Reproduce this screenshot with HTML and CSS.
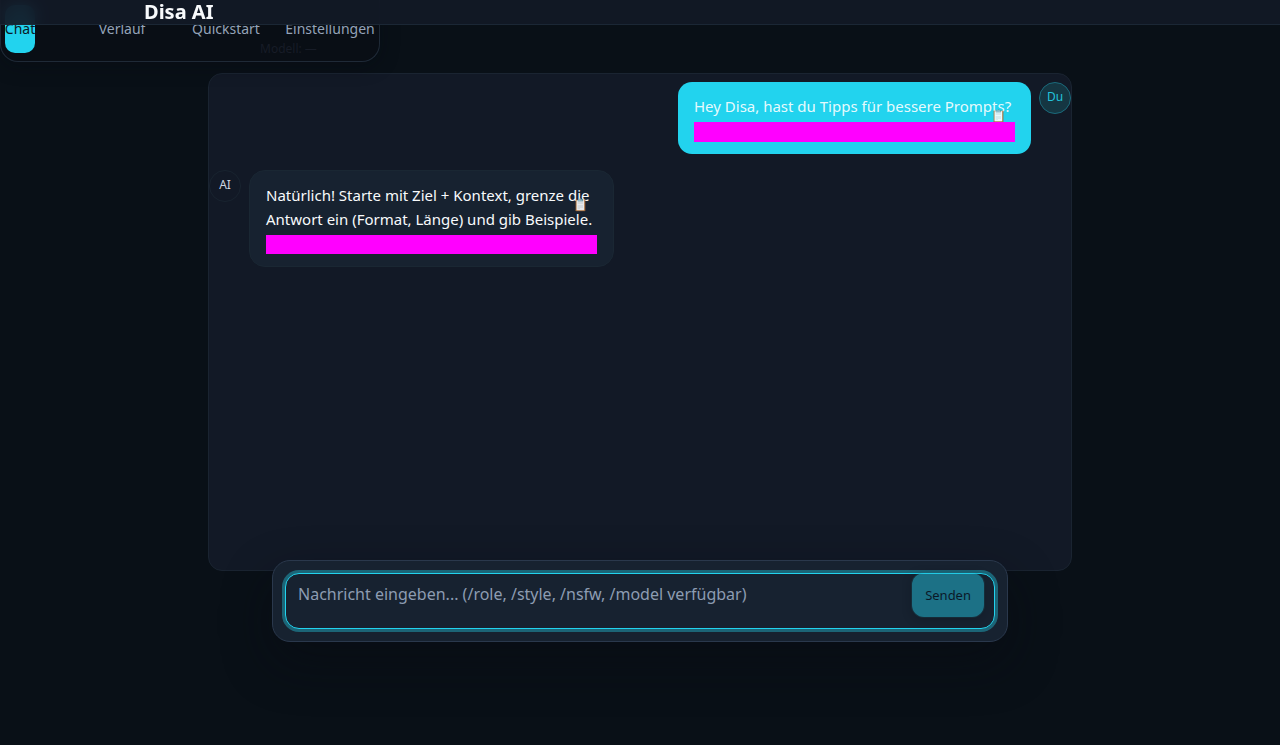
FILE: index.html
```html
<!DOCTYPE html>
<html lang="de">
<head>
<meta charset="utf-8">
<meta name="viewport" content="width=device-width, initial-scale=1">
<title>Disa AI</title>
<link rel="stylesheet" href="styles.css">
</head>
<body>
<header class="topbar"><h1 class="brand">Disa AI</h1></header>
<nav class="tabs" aria-label="Hauptnavigation">
  <a class="tab tab-active" href="#chat">Chat</a>
  <a class="tab" href="#verlauf">Verlauf</a>
  <a class="tab" href="#quickstart">Quickstart</a>
  <a class="tab" href="#einstellungen">Einstellungen</a>
</nav>
<main class="page">
  <p class="model">Modell: —</p>
  <section class="chat" aria-label="Chat">
    <article class="row row-user">
      <div class="bubble bubble-user">
        <p class="text">Hey Disa, hast du Tipps für bessere Prompts?</p>
        <button class="copy" type="button" aria-label="Kopieren">📋</button>
        <div class="meta"></div>
      </div>
      <div class="avatar avatar-user">Du</div>
    </article>
    <article class="row">
      <div class="avatar">AI</div>
      <div class="bubble bubble-ai">
        <p class="text">Natürlich! Starte mit Ziel + Kontext, grenze die<br>Antwort ein (Format, Länge) und gib Beispiele.</p>
        <button class="copy" type="button" aria-label="Kopieren">📋</button>
        <div class="meta"></div>
      </div>
    </article>
  </section>
  <form class="composer">
    <div class="field">
      <textarea class="input" aria-label="Nachricht" placeholder="Nachricht eingeben... (/role, /style, /nsfw, /model verfügbar)"></textarea>
      <button class="send" type="button">Senden</button>
    </div>
  </form>
</main>
</body>
</html>
```
FILE: styles.css
```css
* { box-sizing: border-box; }

body {
  margin: 0;
  min-height: 100vh;
  display: flex;
  flex-direction: column;
  background: #091017;
  color: #f8fafc;
  font-family: "Noto Sans", sans-serif;
}

.topbar {
  position: relative;
  z-index: 20;
  padding: 0 144px;
  border-bottom: 1px solid #1b2735;
  background: rgba(18, 25, 38, .92);
  backdrop-filter: blur(8px);
}

.brand {
  margin: 0;
  font-size: 20px;
  line-height: 24px;
  font-weight: 700;
}

/* Floating navigation, tucked under the top bar */
.tabs {
  position: absolute;
  z-index: 10;
  top: 0;
  left: 0;
  width: 380px;
  padding: 5px 4px 8px;
  display: grid;
  grid-template-columns: 1fr repeat(3, 90px);
  column-gap: 14px;
  border: 1px solid #1f2a37;
  border-top: 0;
  border-radius: 0 0 18px 18px;
  background: rgba(10, 14, 21, .9);
  box-shadow: 0 4px 20px rgba(8, 11, 18, .3);
}

.tab {
  height: 48px;
  display: flex;
  align-items: center;
  justify-content: center;
  color: #94a3b8;
  font-size: 14px;
  line-height: 20px;
  text-decoration: none;
}

.tab-active {
  justify-self: start;
  width: 30px;
  border-radius: 10px;
  background: #22d3ee;
  color: #0a1a26;
}

.page {
  flex: 1;
  width: 100%;
  max-width: 864px;
  margin: 0 auto;
  padding: 14px 0 103px;
  display: flex;
  flex-direction: column;
}

.model {
  position: relative;
  z-index: 11;
  margin: 0 0 14px;
  padding-left: 52px;
  color: #171c27;
  font-size: 12px;
  line-height: 20px;
}

.chat {
  flex: 1;
  padding: 8px 0;
  display: flex;
  flex-direction: column;
  gap: 16px;
  border: 1px solid #1a2431;
  border-radius: 14px;
  background: #121926;
}

.row {
  display: flex;
  align-items: flex-start;
  gap: 8px;
}

.row-user { justify-content: flex-end; }

.avatar {
  width: 32px;
  height: 32px;
  flex: none;
  border: 1px solid #18232f;
  border-radius: 50%;
  color: #cbd5e1;
  font-size: 12px;
  line-height: 28px;
  text-align: center;
}

.avatar-user {
  border-color: #1a6a7b;
  background: #153642;
  color: #22c3dc;
}

.bubble {
  position: relative;
  padding: 12px 16px;
  border-radius: 16px;
  font-size: 15px;
  line-height: 24px;
}

.bubble-user {
  min-width: 353px;
  border-radius: 14px;
  background: #22d3ee;
  color: rgba(255, 255, 255, .9);
}

.bubble-ai {
  min-width: 365px;
  border: 1px solid #1a2733;
  background: #172230;
}

.text { margin: 0 0 4px; }

.meta {
  position: relative;
  height: 20px;
  background: #f0f;
}

.bubble-ai .meta { height: 19px; }

.copy {
  position: absolute;
  top: 24px;
  right: 25px;
  padding: 0;
  border: 0;
  background: none;
  font: 12px/20px "Noto Sans", sans-serif;
  opacity: .9;
}

.composer {
  position: relative;
  z-index: 5;
  margin: -11px 64px 0;
  padding: 12px;
  border: 1px solid #2a384c;
  border-radius: 18px;
  background: #172230;
  box-shadow: 0 20px 50px rgba(8, 11, 18, .45);
}

.field {
  position: relative;
  display: flex;
}

.input {
  width: 100%;
  height: 56px;
  padding: 8px 88px 8px 12px;
  resize: none;
  outline: none;
  border: 1px solid #22d3ee;
  border-radius: 14px;
  background: #172230;
  box-shadow: 0 0 0 3px #1c6577;
  color: #f8fafc;
  font: 16px/24px "Noto Sans", sans-serif;
}

.input::placeholder {
  color: #8d9cb2;
  opacity: 1;
}

.send {
  position: absolute;
  top: 0;
  right: 11px;
  height: 44px;
  padding: 0 13px;
  border: 0;
  border-radius: 12px;
  background: #22c0dc;
  color: #00101c;
  font: 13px/20px "Noto Sans", sans-serif;
  opacity: .5;
  box-shadow: 0 2px 8px rgba(8, 11, 18, .5), 0 0 0 1px rgba(34, 128, 143, .4);
}
```
